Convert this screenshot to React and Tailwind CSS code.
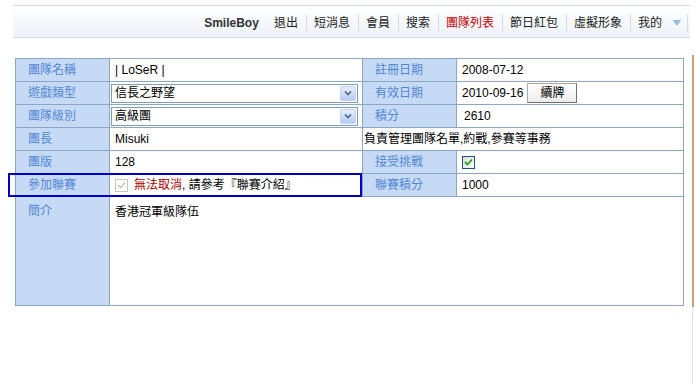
import React from "react";

const font = { fontFamily: '"Liberation Sans", "Noto Sans CJK TC", sans-serif' };

function Sep() {
  return <span className="ml-[8px] mr-[7px] h-[18px] w-px bg-[#d6dde6]" />;
}

function SelectBox({ value }) {
  return (
    <div className="flex h-[19px] w-[247px] items-center border border-[#7f9db9] bg-white">
      <span className="flex-1 pl-[3px] text-[12px] leading-none text-black">{value}</span>
      <span className="mr-px flex h-[15px] w-[16px] items-center justify-center rounded-[2px] border border-[#c3d3fd] bg-gradient-to-b from-[#e6eefc] to-[#b7cbf0]">
        <svg width="8" height="6" viewBox="0 0 8 6">
          <path d="M1 1.5 L4 4.5 L7 1.5" fill="none" stroke="#4d6185" strokeWidth="1.6" />
        </svg>
      </span>
    </div>
  );
}

const L = "bg-[#c6daf6] text-[#5287d4] border border-[#8ca6c6] pl-[12px] text-left font-normal";
const V = "bg-white text-black border border-[#8ca6c6] pl-[5px]";

export default function App() {
  return (
    <div className="relative h-[384px] w-[695px] bg-white text-[12px]" style={font}>
      <div className="pt-[5px] pl-[13px] pr-[5px]">
        <div className="flex h-[33px] items-center justify-end border-t border-b border-[#d3dbe5] bg-gradient-to-b from-white to-[#edf2f8] pt-[3px] pr-0 text-[12px] text-[#222]">
          <span className="text-[12px] font-bold text-[#333]">SmileBoy</span>
          <span className="ml-[15px]">退出</span>
          <Sep />
          <span>短消息</span>
          <Sep />
          <span>會員</span>
          <Sep />
          <span>搜索</span>
          <Sep />
          <span className="text-[#cc0000]">團隊列表</span>
          <Sep />
          <span>節日紅包</span>
          <Sep />
          <span>虛擬形象</span>
          <Sep />
          <span>我的</span>
          <svg className="ml-[11px]" width="8" height="6" viewBox="0 0 8 6">
            <path d="M0.5 0.5 L7.5 0.5 L4 5 Z" fill="#9cc3e8" stroke="#7aa8d8" strokeWidth="0.8" />
          </svg>
          <span className="ml-[6px] mr-[2px] h-[18px] w-px bg-[#d6dde6]" />
        </div>
      </div>

      <div className="pl-[15px] pt-[20px]">
        <table className="w-[668px] table-fixed border-collapse border border-[#7f9db9]">
          <colgroup>
            <col className="w-[94px]" />
            <col className="w-[253px]" />
            <col className="w-[94px]" />
            <col className="w-[227px]" />
          </colgroup>
          <tbody>
            <tr className="h-[23px]">
              <td className={L}>團隊名稱</td>
              <td className={V}>| LoSeR |</td>
              <td className={L}>註冊日期</td>
              <td className={V + " pl-[1px]"}>2008-07-12</td>
            </tr>
            <tr className="h-[23px]">
              <td className={L}>遊戲類型</td>
              <td className="border border-[#8ca6c6] bg-white pl-[1px]">
                <SelectBox value="信長之野望" />
              </td>
              <td className={L}>有效日期</td>
              <td className={V + " pl-[1px]"}>
                <div className="flex items-center">
                  <span>2010-09-16</span>
                  <span className="ml-[4px] flex h-[20px] w-[50px] items-center justify-center border border-[#a9a9a9] border-r-[#707070] border-b-[#707070] bg-gradient-to-b from-white to-[#ececec] text-black">續牌</span>
                </div>
              </td>
            </tr>
            <tr className="h-[23px]">
              <td className={L}>團隊級別</td>
              <td className="border border-[#8ca6c6] bg-white pl-[1px]">
                <SelectBox value="高級團" />
              </td>
              <td className={L}>積分</td>
              <td className={V + " pl-[7px]"}>2610</td>
            </tr>
            <tr className="h-[23px]">
              <td className={L}>團長</td>
              <td className={V}>Misuki</td>
              <td colSpan={2} className="border border-[#8ca6c6] bg-white pl-[1px] text-black">負責管理團隊名單,約戰,參賽等事務</td>
            </tr>
            <tr className="h-[23px]">
              <td className={L}>團版</td>
              <td className={V}>128</td>
              <td className={L}>接受挑戰</td>
              <td className={V}>
                <span className="flex h-[13px] w-[13px] items-center justify-center border border-[#1c5180] bg-gradient-to-br from-[#dcdcd7] to-white">
                  <svg width="9" height="8" viewBox="0 0 9 8">
                    <path d="M1 4 L3.5 6.5 L8 1.5" fill="none" stroke="#21a121" strokeWidth="1.8" />
                  </svg>
                </span>
              </td>
            </tr>
            <tr className="h-[23px]">
              <td className={L}>參加聯賽</td>
              <td className={V}>
                <div className="flex items-center">
                  <span className="flex h-[13px] w-[13px] items-center justify-center border border-[#c9c7ba] bg-white">
                    <svg width="9" height="8" viewBox="0 0 9 8">
                      <path d="M1 4 L3.5 6.5 L8 1.5" fill="none" stroke="#c4c4bc" strokeWidth="1.6" />
                    </svg>
                  </span>
                  <span className="ml-[6px] text-[#b00000]">無法取消</span>
                  <span>,&nbsp;請參考『聯賽介紹』</span>
                </div>
              </td>
              <td className={L}>聯賽積分</td>
              <td className={V}>1000</td>
            </tr>
            <tr className="h-[109px]">
              <td className={L + " align-top pt-[5px]"}>簡介</td>
              <td colSpan={3} className={V + " align-top pt-[6px]"}>香港冠軍級隊伍</td>
            </tr>
          </tbody>
        </table>
      </div>

      <div className="absolute left-[8px] top-[173px] h-[24px] w-[354px] border-2 border-[#0000cc]" />
      <div className="absolute left-[692px] top-[55px] h-[252px] w-[2px] bg-[#c9a27a]" />
      <div className="absolute left-[692px] top-[307px] h-[77px] w-px bg-[#dde6f0]" />
    </div>
  );
}
